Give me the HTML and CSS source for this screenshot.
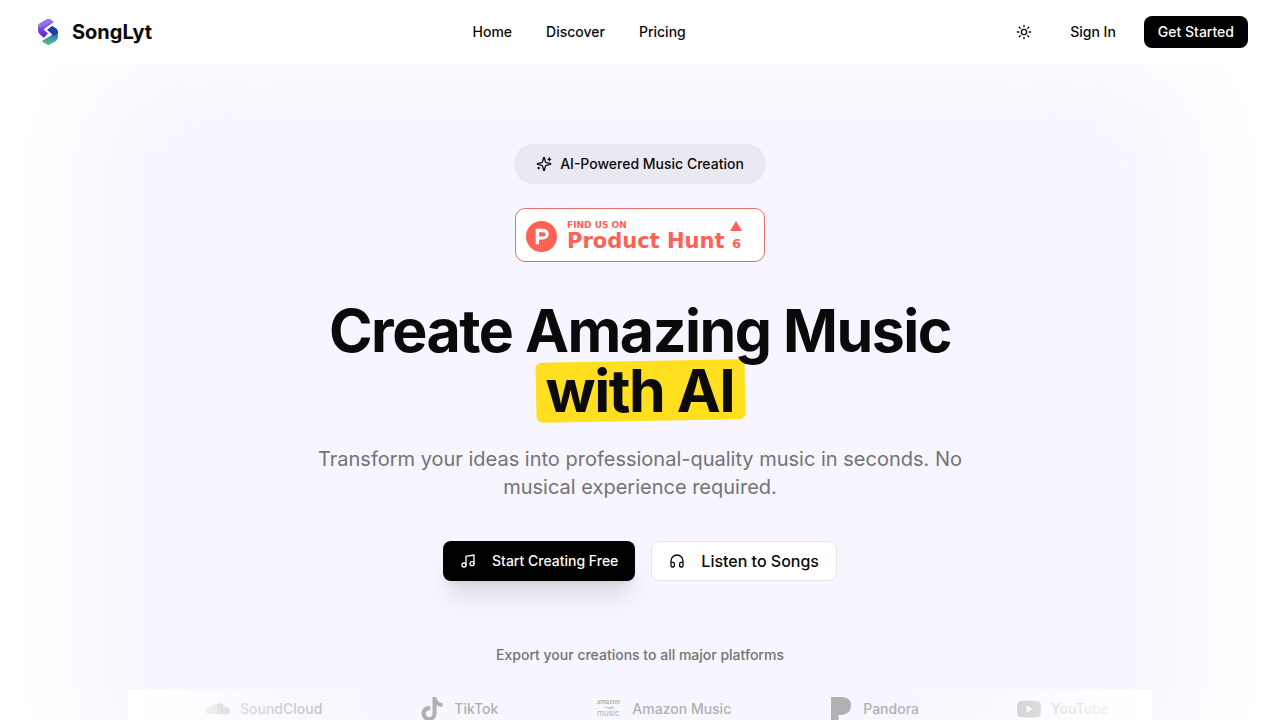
FILE: index.html
```html
<!DOCTYPE html>
<html lang="en">
    <head>
        <meta charset="utf-8">
        <meta name="viewport" content="width=device-width, initial-scale=1">
        <title>SongLyt</title>
        <link rel="stylesheet" href="styles.css">
    </head>

    <body>

        <header class="header">
            <a href="#" class="logo">
                <svg width="32" height="32" viewBox="0 0 32 32">
                    <defs>
                        <linearGradient id="violet" x1="0" y1="0" x2="0" y2="1">
                            <stop offset="0" stop-color="#9b7bea"/>
                            <stop offset="1" stop-color="#5a1fc4"/>
                        </linearGradient>
                        <linearGradient id="teal" x1="0" y1="0" x2="0" y2="1">
                            <stop offset="0" stop-color="#1b3fae"/>
                            <stop offset="1" stop-color="#52c3a0"/>
                        </linearGradient>
                    </defs>
                    <path fill="url(#violet)" d="M14.500 3.500Q16.500 2.300 18.500 3.500L22 6L13 12.500L17 16L12 22L7.500 18Q6 16.500 6 14V10.500Q6 8.500 8 7.300Z"/>
                    <path fill="#9474ea" d="M6 11Q6 8.500 8 7.300L14.500 3.500Q16.500 2.300 18.500 3.500L20 5L8 12Z"/>
                    <path fill="url(#teal)" d="M20 10L24 12.500Q26 14 26 16.500V21Q26 23.500 24 25L18 28.500Q16 29.500 14 28L9.500 25L19 18.500L14.500 14.500Z"/>
                    <path fill="#1c3fb0" d="M20 10L24 12.500Q26 14 26 17L21 20L14.500 14.500Z"/>
                    <path fill="none" stroke="#fff" stroke-width="2" stroke-linejoin="round" d="M22 7.500L13 13.500L19 18.500L9 24.500"/>
                </svg>
                <span>SongLyt</span>
            </a>

            <nav class="nav">
                <a href="#">Home</a>
                <a href="#">Discover</a>
                <a href="#">Pricing</a>
            </nav>

            <div class="actions">
                <button type="button" class="theme" aria-label="Toggle theme">
                    <svg class="icon" width="16" height="16" viewBox="0 0 24 24">
                        <circle cx="12" cy="12" r="4"/>
                        <path d="M12 2v2M12 20v2M4.930 4.930l1.410 1.410M17.660 17.660l1.410 1.410M2 12h2M20 12h2M6.340 17.660l-1.410 1.410M19.070 4.930l-1.410 1.410"/>
                    </svg>
                </button>
                <a href="#" class="signin">Sign In</a>
                <a href="#" class="start">Get Started</a>
            </div>
        </header>

        <main class="hero">
            <div class="badge">
                <svg class="icon" width="16" height="16" viewBox="0 0 24 24">
                    <path d="M9.937 15.500A2 2 0 0 0 8.500 14.063l-6.135-1.582a.5.5 0 0 1 0-.962L8.500 9.936A2 2 0 0 0 9.937 8.500l1.582-6.135a.5.5 0 0 1 .963 0L14.063 8.500A2 2 0 0 0 15.500 9.937l6.135 1.581a.5.5 0 0 1 0 .964L15.500 14.063a2 2 0 0 0-1.437 1.437l-1.582 6.135a.5.5 0 0 1-.963 0z"/>
                    <path d="M20 3v4M22 5h-4M4 17v2M5 18H3"/>
                </svg>
                <span>AI-Powered Music Creation</span>
            </div>

            <a href="#" class="hunt">
                <svg class="huntLogo" width="31" height="31" viewBox="0 0 32 32">
                    <circle cx="16" cy="16" r="16" fill="#ff6154"/>
                    <path fill="#fff" fill-rule="evenodd" d="M10 8h8a5.500 5.500 0 0 1 0 11h-4.500v5H10zM13.500 11.500v4.500H18a2.200 2.200 0 0 0 0-4.500z"/>
                </svg>
                <span class="huntText">
                    <small>FIND US ON</small>
                    <strong>Product Hunt</strong>
                </span>
                <span class="votes">
                    <svg width="12" height="10" viewBox="0 0 12 10"><path fill="#ff6154" d="M6 0l6 10H0z"/></svg>
                    6
                </span>
            </a>

            <h1>Create Amazing Music <span class="mark">with AI</span></h1>

            <p class="lead">Transform your ideas into professional-quality music in seconds. No musical experience required.</p>

            <div class="buttons">
                <a href="#" class="btn btnDark">
                    <svg class="icon" width="16" height="16" viewBox="0 0 24 24">
                        <path d="M9 18V5l12-2v13"/>
                        <circle cx="6" cy="18" r="3"/>
                        <circle cx="18" cy="16" r="3"/>
                    </svg>
                    Start Creating Free
                </a>
                <a href="#" class="btn btnLight">
                    <svg class="icon" width="16" height="16" viewBox="0 0 24 24">
                        <path d="M3 14h3a2 2 0 0 1 2 2v3a2 2 0 0 1-2 2H5a2 2 0 0 1-2-2v-7a9 9 0 0 1 18 0v7a2 2 0 0 1-2 2h-1a2 2 0 0 1-2-2v-3a2 2 0 0 1 2-2h3"/>
                    </svg>
                    Listen to Songs
                </a>
            </div>

            <p class="export">Export your creations to all major platforms</p>

            <div class="platforms">
                <ul>
                    <li>
                        <svg width="24" height="24" viewBox="0 0 24 24">
                            <path opacity=".6" d="M0 14.500q0-2.500 2-3q1-2 3-2q3-3 6-2.500v10H2q-2-.5-2-2.500z"/>
                            <path d="M11 7Q17 4.500 18.500 10.500Q24 9.500 24 14q0 3-3 3H11z"/>
                        </svg>
                        SoundCloud
                    </li>
                    <li>
                        <svg width="24" height="24" viewBox="0 0 24 24">
                            <path d="M12.525.02c1.310-.02 2.610-.01 3.910-.02.08 1.530.63 3.090 1.750 4.170 1.120 1.110 2.700 1.620 4.240 1.790v4.030c-1.440-.05-2.890-.35-4.200-.97-.57-.26-1.100-.59-1.620-.93-.01 2.920.01 5.840-.02 8.750-.08 1.400-.54 2.790-1.350 3.940-1.310 1.920-3.580 3.170-5.910 3.210-1.430.08-2.860-.31-4.080-1.030-2.020-1.190-3.440-3.370-3.650-5.710-.02-.5-.03-1-.01-1.490.18-1.900 1.120-3.720 2.580-4.960 1.660-1.440 3.980-2.130 6.150-1.720.02 1.480-.04 2.960-.04 4.440-.99-.32-2.150-.23-3.020.37-.63.41-1.110 1.040-1.360 1.750-.21.51-.15 1.070-.14 1.610.24 1.640 1.820 3.020 3.500 2.870 1.120-.01 2.190-.66 2.770-1.610.19-.33.4-.67.41-1.060.1-1.790.06-3.570.07-5.360.01-4.030-.01-8.050.02-12.070z"/>
                        </svg>
                        TikTok
                    </li>
                    <li>
                        <svg class="amazon" width="26" height="24" viewBox="0 0 26 24">
                            <text x="1" y="7" font-size="6" font-weight="600">amazon</text>
                            <path d="M7 9q6 3 11 0l-1 2q-5 2-10-2z"/>
                            <text x="1" y="19" font-size="8" font-weight="400">music</text>
                        </svg>
                        Amazon Music
                    </li>
                    <li>
                        <svg width="24" height="24" viewBox="0 0 24 24">
                            <path d="M2 0h10.500C19 0 22 3.500 22 8.500C22 14.500 17.500 18 12 18H9.500v6H2z"/>
                        </svg>
                        Pandora
                    </li>
                    <li>
                        <svg width="24" height="24" viewBox="0 0 24 24">
                            <path fill-rule="evenodd" d="M4 4Q12 3 20 4Q23.500 4 23.700 7.500Q24.300 12 23.700 16.500Q23.500 20 20 20.300Q12 21 4 20.300Q.5 20 .3 16.500Q-.3 12 .3 7.500Q.5 4 4 4zM9.500 8.500v7l6.500-3.500z"/>
                        </svg>
                        YouTube
                    </li>
                </ul>
            </div>
        </main>

    </body>
</html>
```

FILE: styles.css
```css
*{margin:0;padding:0;box-sizing:border-box;}

body{
    font-family: Inter, "Liberation Sans", sans-serif;
    font-size: 14px;
    line-height: 20px;
    font-weight: 500;
    color: #0a0a0a;
    background-color: #fff;
}

a{
    color: inherit;
    text-decoration: none;
}

.icon{
    fill: none;
    stroke: currentColor;
    stroke-width: 2;
    stroke-linecap: round;
    stroke-linejoin: round;
}

/* header */
.header{
    display: flex;
    align-items: center;
    justify-content: space-between;
    height: 64px;
    padding: 0 32px;
    background-color: #fff;
    position: relative;
    z-index: 1;
}

.logo{
    display: flex;
    align-items: center;
    gap: 8px;
    font-size: 20px;
    font-weight: 700;
}

.nav{
    display: flex;
    gap: 34px;
}

.actions{
    display: flex;
    align-items: center;
    gap: 16px;
}

.theme{
    display: flex;
    align-items: center;
    justify-content: center;
    width: 36px;
    height: 36px;
    border: 0;
    background-color: transparent;
    color: inherit;
}

.signin,
.start{
    padding: 6px 12px;
    border-radius: 8px;
}

.start{
    padding: 6px 14px;
    background-color: #000;
    color: #fafafa;
}

/* hero */
.hero{
    position: relative;
    overflow: hidden;
    display: flex;
    flex-direction: column;
    align-items: center;
    padding: 80px 128px 0;
    text-align: center;
}

/* soft violet glow behind the content */
.hero::before{
    content: "";
    position: absolute;
    z-index: -1;
    top: 8px;
    bottom: -40px;
    left: 7%;
    right: 7%;
    border-radius: 80px;
    background-color: #f7f5ff;
    filter: blur(48px);
}

.badge{
    display: flex;
    align-items: center;
    gap: 8px;
    padding: 10px 22px;
    border-radius: 20px;
    background-color: #eae8f1;
}

.hunt{
    display: flex;
    align-items: center;
    gap: 6px;
    width: 250px;
    height: 54px;
    margin-top: 24px;
    padding: 2px 10px 0;
    border: 1px solid #e8706a;
    border-radius: 10px;
    background-color: #fff;
    color: #ff6154;
    font-family: "DejaVu Sans", sans-serif;
    font-weight: 700;
    text-align: left;
}

.huntLogo{
    margin-right: 4px;
}

.huntText small{
    display: block;
    font-size: 9px;
    line-height: 10px;
}

.huntText strong{
    display: block;
    font-size: 21px;
    line-height: 22px;
    white-space: nowrap;
}

.votes{
    display: flex;
    flex-direction: column;
    align-items: center;
    gap: 5px;
    font-size: 13px;
    line-height: 16px;
}

h1{
    max-width: 768px;
    margin-top: 39px;
    font-size: 59px;
    line-height: 60px;
    font-weight: 700;
    letter-spacing: -0.025em;
}

.mark{
    display: table;
    position: relative;
    margin: 0 auto;
    padding: 0 10px;
}

.mark::before{
    content: "";
    position: absolute;
    z-index: -1;
    inset: 0;
    border-radius: 6px;
    background-color: #ffdf20;
    transform: rotate(-1deg);
}

.lead{
    max-width: 672px;
    margin-top: 24px;
    font-size: 20px;
    line-height: 28px;
    font-weight: 400;
    color: #737373;
}

.buttons{
    display: flex;
    gap: 16px;
    margin-top: 40px;
}

.btn{
    display: flex;
    align-items: center;
    gap: 16px;
    height: 40px;
    padding: 0 17px;
    border-radius: 8px;
}

.btnDark{
    background-color: #000;
    color: #fafafa;
    box-shadow: 0 20px 25px -5px rgba(0,0,0,.1), 0 8px 10px -6px rgba(0,0,0,.1);
}

.btnLight{
    border: 1px solid #e5e5e5;
    background-color: #fff;
    font-size: 16px;
}

.export{
    margin-top: 64px;
    color: #737373;
}

/* platforms */
.platforms{
    position: relative;
    width: 100%;
    margin-top: 24px;
    overflow: hidden;
}

.platforms::after{
    content: "";
    position: absolute;
    inset: 0;
    background: linear-gradient(to right, #fff, transparent 25%, transparent 75%, #fff);
}

.platforms ul{
    display: flex;
    gap: 98px;
    padding: 8px 0 8px 78px;
    list-style: none;
}

.platforms li{
    display: flex;
    flex-shrink: 0;
    align-items: center;
    gap: 10px;
    color: #b0b0b3;
}

.platforms svg{
    fill: currentColor;
}
```
